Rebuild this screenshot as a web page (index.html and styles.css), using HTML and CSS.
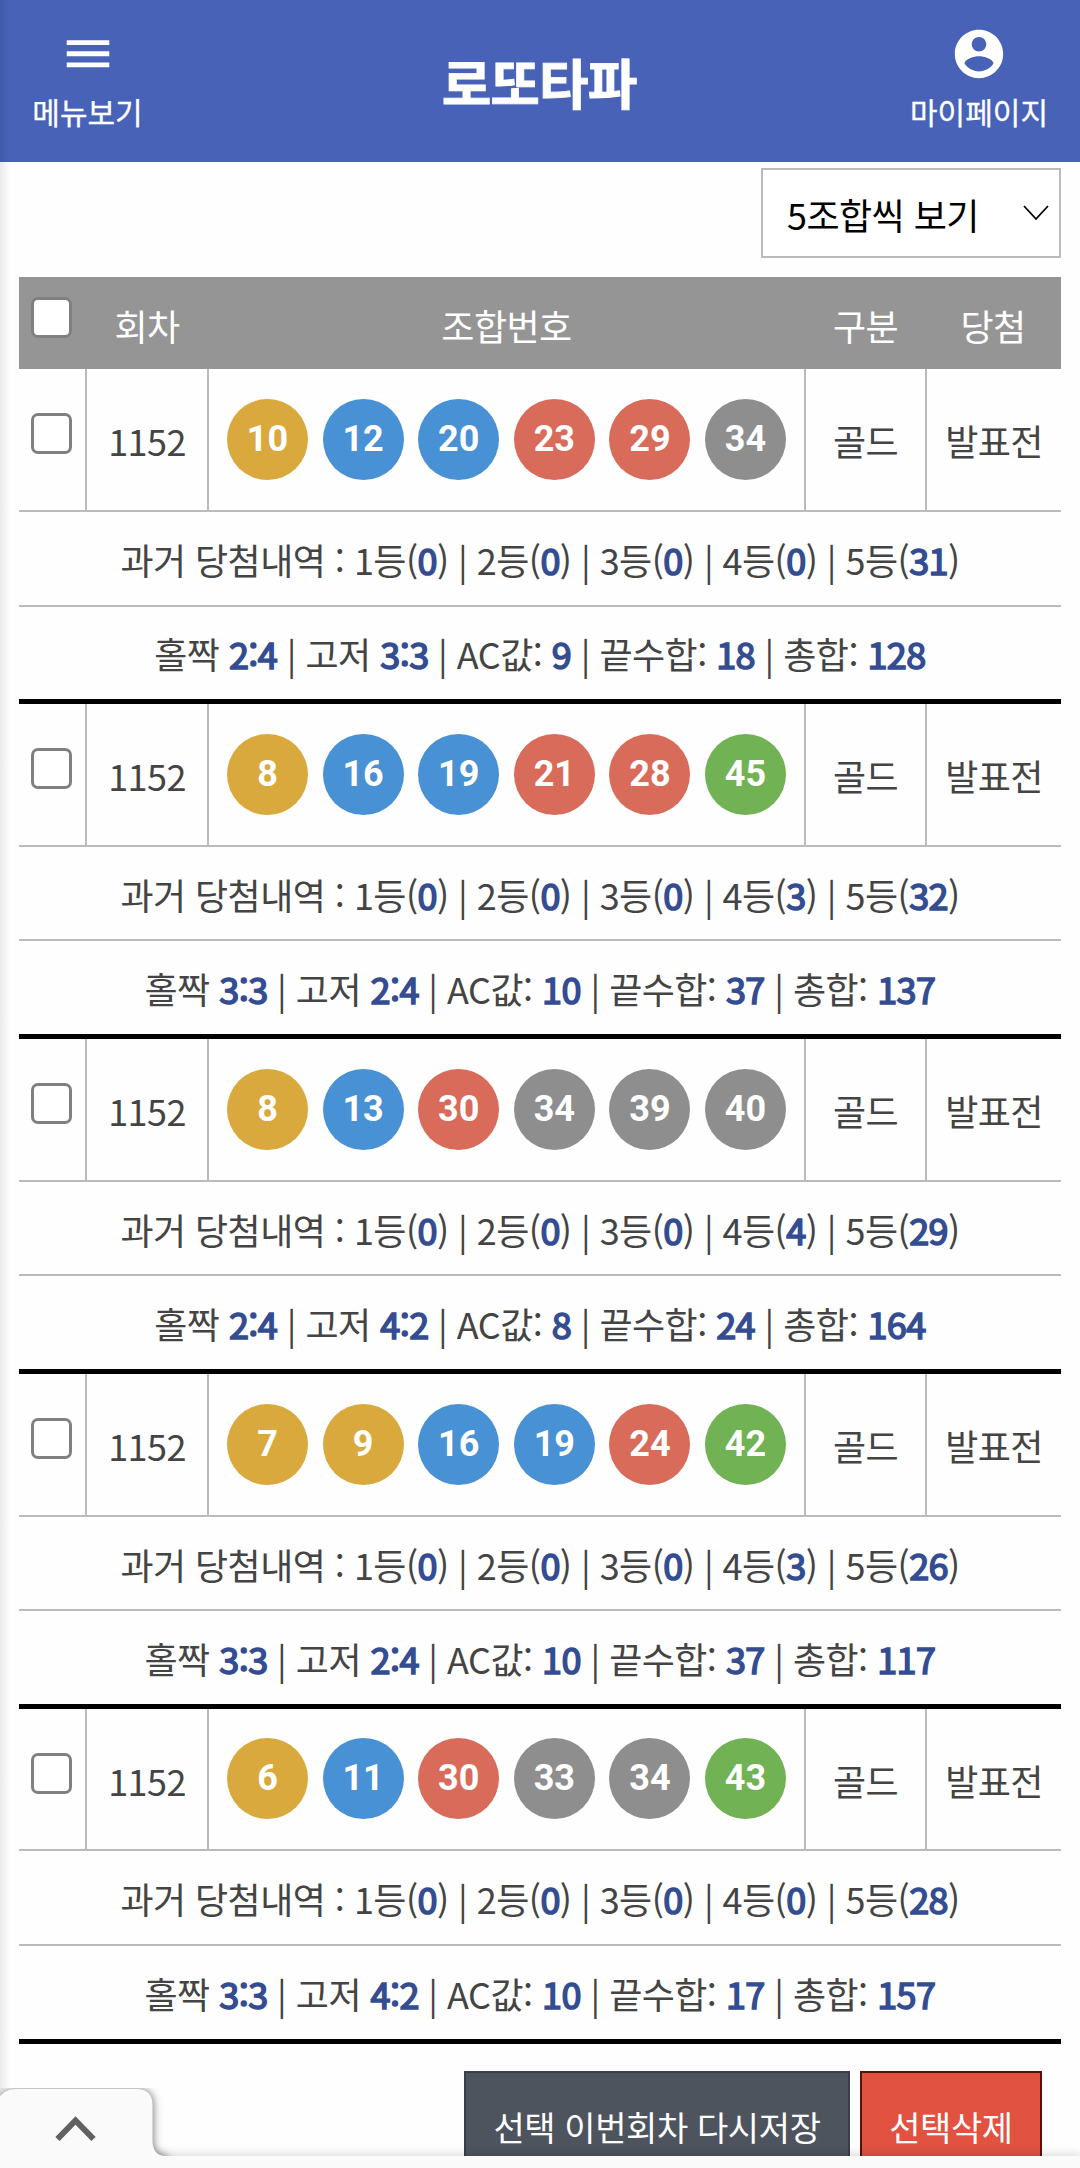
FILE: index.html
```html
<!DOCTYPE html>
<html lang="ko">
<head>
  <meta charset="UTF-8">
  <meta name="viewport" content="width=device-width, initial-scale=1.0">
  <title>로또타파</title>
  <link rel="stylesheet" href="styles.css">
</head>
<body>
  <div class="page">
    <header class="header">
      <a class="header-link">
        <svg class="icon" viewBox="0 0 24 24"><path d="M3.2 6.3h17.6v2H3.2zM3.2 10.9h17.6v2H3.2zM3.2 15.5h17.6v2H3.2z"/></svg>
        <span>메뉴보기</span>
      </a>
      <h1>로또타파</h1>
      <a class="header-link">
        <svg class="icon" viewBox="0 0 24 24"><path d="M12 2C6.48 2 2 6.48 2 12s4.48 10 10 10 10-4.48 10-10S17.52 2 12 2zm0 3c1.66 0 3 1.34 3 3s-1.34 3-3 3-3-1.34-3-3 1.34-3 3-3zm0 14.2c-2.5 0-4.71-1.28-6-3.22.03-1.99 4-3.08 6-3.08 1.99 0 5.97 1.09 6 3.08-1.29 1.94-3.5 3.22-6 3.22z"/></svg>
        <span>마이페이지</span>
      </a>
    </header>

    <main class="content">
      <div class="filter">
        <div class="select">
          <span>5조합씩 보기</span>
          <svg class="select-arrow" viewBox="0 0 26 16"><path d="M1 1l12 13L25 1"/></svg>
        </div>
      </div>

      <table class="list">
        <colgroup>
          <col class="col-check">
          <col class="col-round">
          <col class="col-numbers">
          <col class="col-type">
          <col class="col-result">
        </colgroup>
        <thead>
          <tr>
            <th class="check"><input type="checkbox" aria-label="전체선택"></th>
            <th>회차</th>
            <th>조합번호</th>
            <th>구분</th>
            <th>당첨</th>
          </tr>
        </thead>
        <tbody>
          <tr class="main-row">
            <td class="check"><input type="checkbox"></td>
            <td>1152</td>
            <td><div class="balls"><span class="ball yellow">10</span><span class="ball blue">12</span><span class="ball blue">20</span><span class="ball red">23</span><span class="ball red">29</span><span class="ball gray">34</span></div></td>
            <td>골드</td>
            <td>발표전</td>
          </tr>
          <tr class="history tall">
            <td colspan="5">과거 당첨내역 : 1등(<b>0</b>) | 2등(<b>0</b>) | 3등(<b>0</b>) | 4등(<b>0</b>) | 5등(<b>31</b>)</td>
          </tr>
          <tr class="stats short">
            <td colspan="5">홀짝 <b>2:4</b> | 고저 <b>3:3</b> | AC값: <b>9</b> | 끝수합: <b>18</b> | 총합: <b>128</b></td>
          </tr>
        </tbody>
        <tbody>
          <tr class="main-row">
            <td class="check"><input type="checkbox"></td>
            <td>1152</td>
            <td><div class="balls"><span class="ball yellow">8</span><span class="ball blue">16</span><span class="ball blue">19</span><span class="ball red">21</span><span class="ball red">28</span><span class="ball green">45</span></div></td>
            <td>골드</td>
            <td>발표전</td>
          </tr>
          <tr class="history">
            <td colspan="5">과거 당첨내역 : 1등(<b>0</b>) | 2등(<b>0</b>) | 3등(<b>0</b>) | 4등(<b>3</b>) | 5등(<b>32</b>)</td>
          </tr>
          <tr class="stats">
            <td colspan="5">홀짝 <b>3:3</b> | 고저 <b>2:4</b> | AC값: <b>10</b> | 끝수합: <b>37</b> | 총합: <b>137</b></td>
          </tr>
        </tbody>
        <tbody>
          <tr class="main-row">
            <td class="check"><input type="checkbox"></td>
            <td>1152</td>
            <td><div class="balls"><span class="ball yellow">8</span><span class="ball blue">13</span><span class="ball red">30</span><span class="ball gray">34</span><span class="ball gray">39</span><span class="ball gray">40</span></div></td>
            <td>골드</td>
            <td>발표전</td>
          </tr>
          <tr class="history">
            <td colspan="5">과거 당첨내역 : 1등(<b>0</b>) | 2등(<b>0</b>) | 3등(<b>0</b>) | 4등(<b>4</b>) | 5등(<b>29</b>)</td>
          </tr>
          <tr class="stats">
            <td colspan="5">홀짝 <b>2:4</b> | 고저 <b>4:2</b> | AC값: <b>8</b> | 끝수합: <b>24</b> | 총합: <b>164</b></td>
          </tr>
        </tbody>
        <tbody>
          <tr class="main-row">
            <td class="check"><input type="checkbox"></td>
            <td>1152</td>
            <td><div class="balls"><span class="ball yellow">7</span><span class="ball yellow">9</span><span class="ball blue">16</span><span class="ball blue">19</span><span class="ball red">24</span><span class="ball green">42</span></div></td>
            <td>골드</td>
            <td>발표전</td>
          </tr>
          <tr class="history">
            <td colspan="5">과거 당첨내역 : 1등(<b>0</b>) | 2등(<b>0</b>) | 3등(<b>0</b>) | 4등(<b>3</b>) | 5등(<b>26</b>)</td>
          </tr>
          <tr class="stats">
            <td colspan="5">홀짝 <b>3:3</b> | 고저 <b>2:4</b> | AC값: <b>10</b> | 끝수합: <b>37</b> | 총합: <b>117</b></td>
          </tr>
        </tbody>
        <tbody>
          <tr class="main-row short">
            <td class="check"><input type="checkbox"></td>
            <td>1152</td>
            <td><div class="balls"><span class="ball yellow">6</span><span class="ball blue">11</span><span class="ball red">30</span><span class="ball gray">33</span><span class="ball gray">34</span><span class="ball green">43</span></div></td>
            <td>골드</td>
            <td>발표전</td>
          </tr>
          <tr class="history tall">
            <td colspan="5">과거 당첨내역 : 1등(<b>0</b>) | 2등(<b>0</b>) | 3등(<b>0</b>) | 4등(<b>0</b>) | 5등(<b>28</b>)</td>
          </tr>
          <tr class="stats">
            <td colspan="5">홀짝 <b>3:3</b> | 고저 <b>4:2</b> | AC값: <b>10</b> | 끝수합: <b>17</b> | 총합: <b>157</b></td>
          </tr>
        </tbody>
      </table>

      <div class="actions">
        <button class="button" type="button">선택 이번회차 다시저장</button>
        <button class="button danger" type="button">선택삭제</button>
      </div>
    </main>

    <div class="bottom-bar"></div>
    <svg class="bottom-tab" viewBox="0 0 180 68">
      <path class="tab-shape" d="M-3 80V13Q3 1 16 1H136Q152.500 1 152.500 17V52Q152.500 68 166 68V80z"/>
      <path class="tab-arrow" d="M57.500 51L75.500 32.500L93.500 51"/>
    </svg>
  </div>
</body>
</html>
```

FILE: styles.css
```css
:root {
  --primary: #4762b7;
  --point: #344d92;
  --text: #444;
  --line: #bbb;
  --head: #959595;
}

* {
  margin: 0;
  padding: 0;
  box-sizing: border-box;
}

body {
  font-family: 'Noto Sans CJK KR', sans-serif;
  font-size: 36px;
  letter-spacing: -0.55px;
  color: var(--text);
  background-color: #fefefe;
}

.page {
  position: relative;
  height: 2168px;
  overflow: hidden;
}

/* soft shade along the left edge */
.page::before {
  content: '';
  position: absolute;
  left: 0;
  top: 0;
  width: 10px;
  height: 100%;
  background: linear-gradient(to right, rgba(0, 0, 0, 0.08), rgba(0, 0, 0, 0));
  z-index: 1;
}

.header {
  display: flex;
  justify-content: space-between;
  height: 162px;
  padding: 25px 32px 0 33px;
  background-color: var(--primary);
  color: #fff;
}

.header-link {
  display: flex;
  flex-direction: column;
  align-items: center;
  width: 138px;
  font-size: 30px;
  line-height: 40px;
  letter-spacing: 0;
  white-space: nowrap;
  -webkit-text-stroke: 0.3px;
}

.header-link:first-child {
  width: 109px;
}

.icon {
  width: 58px;
  height: 58px;
  margin-bottom: 8px;
  fill: #fff;
}

.header h1 {
  margin-left: 26px;
  font-size: 54px;
  font-weight: 700;
  line-height: 114px;
  letter-spacing: -1px;
  -webkit-text-stroke: 0.8px;
}

.content {
  padding: 6px 19px 0;
}

.filter {
  display: flex;
  justify-content: flex-end;
  margin-bottom: 19px;
}

.select {
  display: flex;
  align-items: center;
  justify-content: space-between;
  width: 300px;
  height: 90px;
  padding: 1px 10px 0 24px;
  border: 2px solid var(--line);
  background-color: #fff;
  color: #000;
}

.select-arrow {
  width: 26px;
  height: 16px;
  margin-bottom: 1px;
  fill: none;
  stroke: #000;
  stroke-width: 1.8;
}

.list {
  width: 100%;
  table-layout: fixed;
  border-collapse: separate;
  border-spacing: 0;
  line-height: 50px;
  text-align: center;
}

.col-check { width: 68px; }
.col-round { width: 122px; }
.col-numbers { width: 597px; }
.col-type { width: 121px; }
.col-result { width: 134px; }

.list th {
  height: 92px;
  padding: 4px 2px 0 0;
  background-color: var(--head);
  color: #fff;
  font-weight: 400;
}

.list td {
  border-bottom: 2px solid var(--line);
  white-space: nowrap;
}

.main-row td {
  height: 143px;
  padding-top: 1px;
  border-right: 2px solid var(--line);
}

.main-row.short td {
  height: 142px;
}

.main-row td:last-child {
  border-right: none;
}

.list .check {
  padding: 0 4px 12px 0;
}

.list td.check {
  padding: 0 2px 12px 0;
}

.check input {
  display: block;
  width: 41px;
  height: 41px;
  margin: 0 auto;
  appearance: none;
  border: 3px solid #808080;
  border-radius: 7px;
  background-color: #fff;
}

.history td {
  height: 94px;
  padding-top: 1px;
}

.history.tall td {
  height: 95px;
}

.stats td {
  height: 98px;
  padding-top: 0;
  border-bottom: 5px solid #000;
}

.stats.short td {
  height: 97px;
}

/* thickened regular weight keeps the digits at their normal width */
.list b {
  color: var(--point);
  font-weight: 400;
  -webkit-text-stroke: 1.6px var(--point);
}

.balls {
  display: flex;
  justify-content: center;
  gap: 14.6px;
  margin-top: -2px;
}

.ball {
  width: 81px;
  height: 81px;
  border-radius: 50%;
  font-family: Roboto, sans-serif;
  font-weight: 700;
  line-height: 80px;
  letter-spacing: 0;
  color: #fff;
}

.yellow { background-color: #d9a93e; }
.blue { background-color: #4791d4; }
.red { background-color: #d86b5a; }
.gray { background-color: #8e8e8e; }
.green { background-color: #70b254; }

.actions {
  display: flex;
  justify-content: flex-end;
  gap: 10px;
  padding: 27px 19px 0 0;
}

.button {
  width: 386px;
  height: 110px;
  padding-top: 1px;
  border: 2px solid #3a3f47;
  background-color: #4e545e;
  color: #fff;
  font-family: inherit;
  font-size: 34px;
  letter-spacing: -0.4px;
  white-space: nowrap;
}

.button.danger {
  width: 182px;
  border-color: #5a110a;
  background-color: #e15241;
}

.bottom-bar {
  position: absolute;
  left: 0;
  right: 0;
  bottom: 0;
  height: 12px;
  background-color: #fafafa;
  box-shadow: 0 -2px 10px rgba(0, 0, 0, 0.15);
  z-index: 2;
}

.bottom-tab {
  position: absolute;
  left: 0;
  bottom: 12px;
  width: 180px;
  height: 68px;
  z-index: 3;
}

.tab-shape {
  fill: #fafafa;
  filter: drop-shadow(1px 0 4px rgba(0, 0, 0, 0.5));
}

.tab-arrow {
  fill: none;
  stroke: #616161;
  stroke-width: 6;
}
```
